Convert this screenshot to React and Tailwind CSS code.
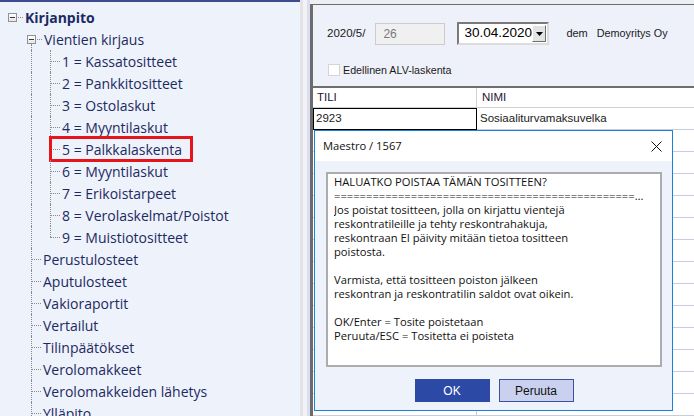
import React from "react";

const tree = [
    { t: "Kirjanpito", kind: "root" },
    { t: "Vientien kirjaus", kind: "branch" },
    { t: "1 = Kassatositteet", kind: "child" },
    { t: "2 = Pankkitositteet", kind: "child" },
    { t: "3 = Ostolaskut", kind: "child" },
    { t: "4 = Myyntilaskut", kind: "child" },
    { t: "5 = Palkkalaskenta", kind: "child", marked: true },
    { t: "6 = Myyntilaskut", kind: "child" },
    { t: "7 = Erikoistarpeet", kind: "child" },
    { t: "8 = Verolaskelmat/Poistot", kind: "child" },
    { t: "9 = Muistiotositteet", kind: "child", last: true },
    { t: "Perustulosteet", kind: "leaf" },
    { t: "Aputulosteet", kind: "leaf" },
    { t: "Vakioraportit", kind: "leaf" },
    { t: "Vertailut", kind: "leaf" },
    { t: "Tilinpäätökset", kind: "leaf" },
    { t: "Verolomakkeet", kind: "leaf" },
    { t: "Verolomakkeiden lähetys", kind: "leaf" },
    { t: "Ylläpito", kind: "leaf" },
];

const dialogLines = [
    "HALUATKO POISTAA TÄMÄN TOSITTEEN?",
    "=".repeat(80),
    "Jos poistat tositteen, jolla on kirjattu vientejä",
    "reskontratileille ja tehty reskontrahakuja,",
    "reskontraan EI päivity mitään tietoa tositteen",
    "poistosta.",
    "",
    "Varmista, että tositteen poiston jälkeen",
    "reskontran ja reskontratilin saldot ovat oikein.",
    "",
    "OK/Enter = Tosite poistetaan",
    "Peruuta/ESC = Tositetta ei poisteta",
];

const Box = () => (
    <div className="w-[9px] h-[9px] border border-[#919191] bg-gradient-to-b from-white to-[#e6e6e6] flex items-center justify-center">
        <div className="w-[5px] h-px bg-[#3a3a3a]"></div>
    </div>
);

const TreeRow = ({ item }) => {
    const label = "text-[#1c2a63] whitespace-nowrap ml-[2px]";

    if (item.kind === "root") {
        return (
            <div className="flex items-center h-[22px] pl-[8px]">
                <Box />
                <div className="w-[5px] ml-px border-t border-dotted border-[#8a8a8a]"></div>
                <span className={label + " font-bold text-[#1b1f4d]"}>{item.t}</span>
            </div>
        );
    }

    if (item.kind === "branch") {
        return (
            <div className="flex items-center h-[22px] pl-[27px]">
                <div className="relative w-[9px] h-full flex items-center">
                    <Box />
                    <span className="absolute left-[4px] top-[16px] bottom-0 border-l border-dotted border-[#8a8a8a]"></span>
                </div>
                <div className="w-[5px] ml-px border-t border-dotted border-[#8a8a8a]"></div>
                <span className={label}>{item.t}</span>
            </div>
        );
    }

    if (item.kind === "child") {
        return (
            <div className="relative flex items-center h-[22px] pl-[27px]">
                <div className="relative w-[18px] h-full">
                    <span className="absolute left-[4px] top-0 bottom-0 border-l border-dotted border-[#8a8a8a]"></span>
                </div>
                <div className="relative w-[15px] h-full">
                    <span className={"absolute left-[5px] top-0 border-l border-dotted border-[#8a8a8a] " + (item.last ? "h-[11px]" : "bottom-0")}></span>
                    <span className="absolute left-[5px] right-0 top-[11px] border-t border-dotted border-[#8a8a8a]"></span>
                </div>
                <span className={label}>{item.t}</span>
                {item.marked && (
                    <div className="absolute left-[49px] top-[-2px] w-[144px] h-[26px] border-[3px] border-[#e8141c]"></div>
                )}
            </div>
        );
    }

    return (
        <div className="flex items-center h-[22px] pl-[27px]">
            <div className="relative w-[14px] h-full">
                <span className="absolute left-[4px] top-0 bottom-0 border-l border-dotted border-[#8a8a8a]"></span>
                <span className="absolute left-[5px] right-0 top-[11px] border-t border-dotted border-[#8a8a8a]"></span>
            </div>
            <span className={label}>{item.t}</span>
        </div>
    );
};

const App = () => {
    const gridRows = Array.from({ length: 13 });

    return (
        <div className="relative w-[694px] h-[416px] overflow-hidden flex bg-[#eef2fa]">
            {/* tree */}
            <div className="w-[300px] h-full shrink-0 bg-[#eef2fa] border-t-2 border-[#3d4b8f] pt-[4px] font-['Open_Sans',sans-serif] text-[14px]">
                {tree.map((item, i) => (
                    <TreeRow key={i} item={item} />
                ))}
            </div>

            {/* splitter */}
            <div className="flex h-full shrink-0">
                <div className="w-[3px] bg-[#e4e4e6]"></div>
                <div className="w-[4px] bg-[#f3f3f5]"></div>
                <div className="w-[3px] bg-[#dadef0]"></div>
            </div>

            {/* right */}
            <div className="flex-1 h-full flex flex-col bg-[#eeeff3] pt-[4px] font-['Liberation_Sans',Arial,sans-serif] text-[#1a1a1a]">
                <div className="flex-1 flex flex-col bg-[#eef1f9] border-t border-l-[3px] border-[#6c6c6c]">
                    <div className="h-[81px] shrink-0 flex flex-col">
                        <div className="flex items-center h-[23px] mt-[17px] pl-[14px] text-[11px]">
                            <span className="text-[11.5px]">2020/5/</span>
                            <div className="ml-[10px] w-[70px] h-[22px] border border-[#cccccc] bg-[#f0f0f0] flex items-center pl-[7px] text-[12px] text-[#7a7a7a]">26</div>
                            <div className="ml-[12px] w-[92px] h-[23px] bg-white border-2 border-t-[#7a7a7a] border-l-[#7a7a7a] border-r-[#dcdcdc] border-b-[#dcdcdc] flex items-center justify-between pl-[5px] pr-[1px]">
                                <span className="text-[13.5px] text-black">30.04.2020</span>
                                <div className="w-[14px] h-[17px] bg-[#e3e3e3] border border-t-white border-l-white border-r-[#6e6e6e] border-b-[#6e6e6e] flex items-center justify-center">
                                    <svg width="7" height="4" viewBox="0 0 7 4"><path d="M0 0h7L3.5 4z" fill="#000" /></svg>
                                </div>
                            </div>
                            <span className="ml-[17px]">dem</span>
                            <span className="ml-[9px] text-[10.8px]">Demoyritys Oy</span>
                        </div>
                        <div className="flex items-center mt-[17px] pl-[15px] text-[10.7px]">
                            <div className="w-[12px] h-[12px] bg-white border border-[#d4d4d4]"></div>
                            <span className="ml-[3px]">Edellinen ALV-laskenta</span>
                        </div>
                    </div>

                    {/* grid */}
                    <div className="flex-1 flex flex-col bg-white text-[11.5px]">
                        <div className="flex h-[22px] border-t-2 border-[#6f6f6f]">
                            <div className="w-[164px] border-r border-b border-[#d0d0d0] flex items-center pl-[4px] text-[#2a1236]">TILI</div>
                            <div className="flex-1 border-b border-[#d0d0d0] flex items-center pl-[5px] text-[#2a1236]">NIMI</div>
                        </div>
                        <div className="flex h-[22px]">
                            <div className="w-[164px] border border-black flex items-center pl-[2px]">2923</div>
                            <div className="flex-1 border-b border-[#c9ccdf] flex items-center pl-[3px]">Sosiaaliturvamaksuvelka</div>
                        </div>
                        {gridRows.map((_, i) => (
                            <div key={i} className="flex h-[22px] shrink-0">
                                <div className="w-[164px] border-r border-b border-[#c9ccdf]"></div>
                                <div className="flex-1 border-b border-[#c9ccdf]"></div>
                            </div>
                        ))}
                    </div>
                </div>
            </div>

            {/* dialog */}
            <div className="absolute left-[314px] top-[130px] w-[359px] h-[281px] border border-[#1a82d8] bg-[#eef2fa] flex flex-col font-['Open_Sans',sans-serif] text-[#111]">
                <div className="h-[30px] shrink-0 bg-white flex items-center justify-between pl-[8px] pr-[10px]">
                    <span className="text-[11.2px]">Maestro / 1567</span>
                    <svg width="11" height="11" viewBox="0 0 11 11">
                        <path d="M0.5 0.5L10.5 10.5M10.5 0.5L0.5 10.5" stroke="#111" strokeWidth="1" />
                    </svg>
                </div>
                <div className="flex-1 flex flex-col pl-[11px] pr-[10px] pt-[11px]">
                    <div className="h-[195px] bg-white border-2 border-[#acacac] pl-[6px] pr-[13px] pt-[1px] text-[11.2px] leading-[14px]">
                        {dialogLines.map((line, i) => (
                            <div key={i} className="h-[14px] whitespace-nowrap overflow-hidden text-ellipsis">{line}</div>
                        ))}
                    </div>
                    <div className="flex justify-center gap-[9px] mt-[12px]">
                        <button className="w-[75px] h-[23px] bg-[#2c4aa5] text-white text-[12px] font-['Liberation_Sans',Arial,sans-serif]">OK</button>
                        <button className="w-[75px] h-[23px] bg-[#c9d1ee] border border-[#3b4fa3] text-[#111] text-[12px] font-['Liberation_Sans',Arial,sans-serif]">Peruuta</button>
                    </div>
                </div>
            </div>
        </div>
    );
};

export default App;
